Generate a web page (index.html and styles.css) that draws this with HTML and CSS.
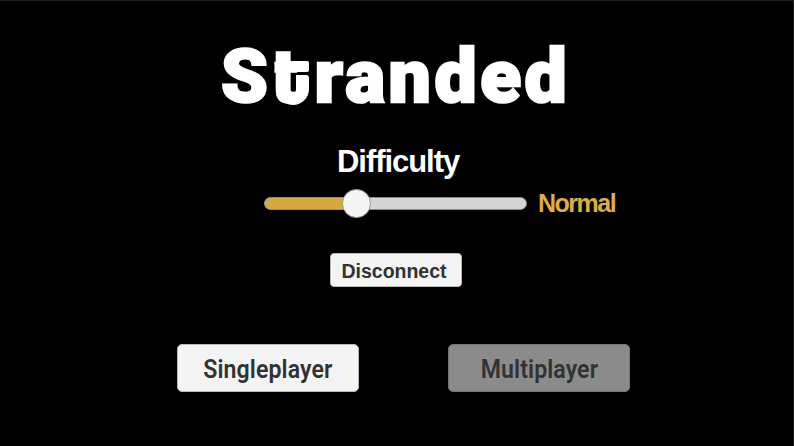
FILE: index.html
```html
<!DOCTYPE html>
<html lang="en">
<head>
<meta charset="utf-8">
<title>Stranded</title>
<link rel="stylesheet" href="styles.css">
</head>
<body>
<main class="menu">
  <h1 class="title"><span>S<span class="hook">t</span>randed</span></h1>
  <h2 class="label">Difficulty</h2>
  <div class="difficulty">
    <div class="slider"><div class="fill"></div><div class="thumb"></div></div>
    <span class="value">Normal</span>
  </div>
  <button class="button disconnect">Disconnect</button>
  <div class="modes">
    <button class="button mode"><span>Singleplayer</span></button>
    <button class="button mode off" disabled><span>Multiplayer</span></button>
  </div>
</main>
</body>
</html>
```
FILE: styles.css
```css
* { box-sizing: border-box; }
body { margin: 0; background: #000; }
.menu {
  width: 794px;
  height: 446px;
  overflow: hidden;
  border-top: 1px solid #202020;
  border-right: 1px solid #202020;
  color: #fff;
  font-family: "Liberation Sans", sans-serif;
  display: flex;
  flex-direction: column;
}
.title {
  margin: 33px 0 0 221px;
  height: 84px;
  font: 900 75px/84px Roboto, sans-serif;
  letter-spacing: 3.5px;
  white-space: nowrap;
  -webkit-text-stroke: 2.5px #fff;
}
/* The t ends in a raised hook below its crossbar. */
.hook {
  position: relative;
  display: inline-block;
  width: 43px;
  letter-spacing: 0;
  clip-path: inset(0 0 0 3px);
}
.hook::before {
  content: "";
  position: absolute;
  left: 14px;
  top: 27px;
  width: 24px;
  height: 11px;
  border-radius: 2px;
  background: #fff;
}
.hook::after {
  content: "";
  position: absolute;
  box-sizing: border-box;
  left: 8px;
  bottom: 13px;
  width: 30px;
  height: 30px;
  border: solid #fff;
  border-width: 0 13px 12px 9px;
  border-radius: 0 3px 16px 14px;
}
.label {
  margin: 26px 0 0 337px;
  height: 36px;
  font-size: 31px;
  line-height: 36px;
  letter-spacing: -1.05px;
  white-space: nowrap;
}
.difficulty { display: flex; align-items: center; height: 30px; margin: 8px 0 0 264px; }
.slider {
  position: relative;
  width: 263px;
  height: 13px;
  border: 1px solid #8d8d8d;
  border-radius: 7px;
  background: #d5d5d5;
}
.fill { width: 92px; height: 11px; border-radius: 6px 0 0 6px; background: #d6a93f; }
.thumb {
  position: absolute;
  left: 77px;
  top: -9px;
  width: 29px;
  height: 29px;
  border: 1px solid #999;
  border-radius: 50%;
  background: #f5f5f5;
}
.value {
  margin-left: 11px;
  font-size: 25px;
  line-height: 30px;
  font-weight: bold;
  letter-spacing: -1.5px;
  color: #dfae3e;
}
.button {
  display: flex;
  align-items: center;
  justify-content: center;
  padding: 0;
  border: 1px solid #bababa;
  border-radius: 5px;
  background: #f4f4f4;
  color: #323232;
  white-space: nowrap;
}
.disconnect {
  width: 132px;
  height: 34px;
  margin: 35px 0 0 330px;
  padding: 2px 4px 0 0;
  border-radius: 4px;
  font: bold 19.5px "Liberation Sans", sans-serif;
}
.modes { display: flex; gap: 89px; margin: 57px 0 0 177px; }
.mode {
  width: 182px;
  height: 48px;
  padding: 2px 0 0;
  font: 600 25px Roboto, sans-serif;
  letter-spacing: .1px;
}
.mode > span { transform: scaleX(.925); }
.off { border-color: #747474; background: #8b8b8b; }
```
